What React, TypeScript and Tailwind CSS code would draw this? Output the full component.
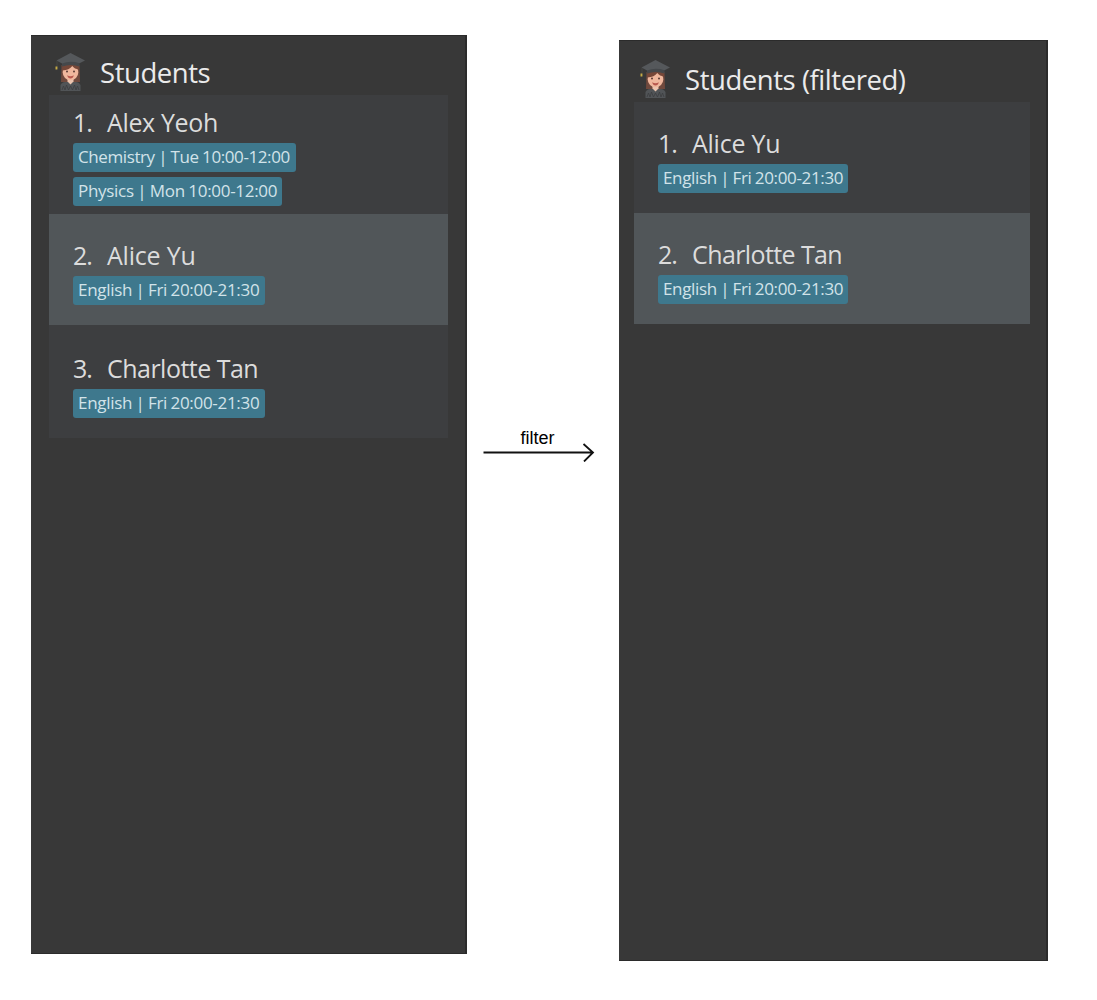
import { clsx } from "clsx";

type Lesson = { text: string; className: string };
type Student = {
  name: string;
  nameClass: string;
  rowClass: string;
  lessons: Lesson[];
};

function GraduateIcon() {
  return (
    <svg viewBox="0 0 34 42" className="h-[42px] w-[34px] shrink-0">
      <path d="M8.500 14h18l.5 17h-19z" fill="#70493d" />
      <path d="M7.500 34q1.500-3 5-3h10q3.500 0 5 3V40h-20z" fill="#515457" />
      <path d="M9 39l1.500-4 1.500 4 1.500-5 2 5 2-4 2 4 2-5 1.500 5 1.500-4 1.500 4" stroke="#3c3e40" strokeWidth="0.800" fill="none" />
      <path d="M14.500 27h6v3.500l-3 3-3-3z" fill="#edc5b0" />
      <ellipse cx="17.500" cy="21.500" rx="7.800" ry="7.800" fill="#f0b79d" />
      <path d="M9.500 14h16l.8 4.500q-5-.5-7-3.500-3 4-9.800 4.500z" fill="#764738" />
      <circle cx="14" cy="20.500" r="1" fill="#5b3a34" />
      <circle cx="21" cy="20.500" r="1" fill="#5b3a34" />
      <path d="M14.200 24.200q3.300 2 6.600 0-.8 3.200-3.300 3.200t-3.300-3.200z" fill="#b9584e" />
      <path d="M9 10q8.500-3 17.500 0v5.500q-8.500-3-17.500 0z" fill="#45484b" />
      <path d="M3.500 9.500L17.500 2l14.500 7.500-5.500 2.700q-9-3-17.500.2z" fill="#55585b" />
      <path d="M4 10v8" stroke="#464a46" strokeWidth="0.800" />
      <path d="M2.500 15.500h1.900v3H2.500z" fill="#c5aa45" />
    </svg>
  );
}

function StudentRow({ student, index, selected }: { student: Student; index: number; selected: boolean }) {
  return (
    <li className={clsx("pl-6", selected ? "bg-[#515659]" : "bg-[#3d3e40]", student.rowClass)}>
      <div className="flex h-10 items-center text-[25px] leading-10 text-[#dcdcdc]">
        <span className="w-[34px] shrink-0 pb-0.5 tracking-[-1px]">{index}.</span>
        <span className={clsx("pb-0.5 whitespace-nowrap", student.nameClass)}>{student.name}</span>
      </div>
      <div className="flex flex-col items-start gap-[5px]">
        {student.lessons.map((lesson) => (
          <span
            key={lesson.text}
            className={clsx(
              "h-[29px] rounded-[3px] bg-[#3e788d] pl-[5px] text-[17px] leading-[28px] whitespace-nowrap text-[#d2e3e9]",
              lesson.className,
            )}
          >
            {lesson.text}
          </span>
        ))}
      </div>
    </li>
  );
}

function Panel({ title, titleClass, headerClass, className, students, selected }: {
  title: string;
  titleClass: string;
  headerClass: string;
  className: string;
  students: Student[];
  selected: number;
}) {
  return (
    <section className={clsx("shrink-0 border-t border-b border-[#2b2b2b] bg-[#383838]", className)}>
      <header className={clsx("flex text-[27.500px] text-[#ebebeb]", headerClass)}>
        <GraduateIcon />
        <h1 className={clsx("ml-[13px] leading-[44px] whitespace-nowrap", titleClass)}>{title}</h1>
      </header>
      <ul>
        {students.map((s, i) => (
          <StudentRow key={s.name} student={s} index={i + 1} selected={i === selected} />
        ))}
      </ul>
    </section>
  );
}

const allStudents: Student[] = [
  {
    name: "Alex Yeoh",
    nameClass: "tracking-[-0.35px]",
    rowClass: "h-[119px] pt-2",
    lessons: [
      { text: "Chemistry | Tue 10:00-12:00", className: "w-[223px] tracking-[-0.4px] [word-spacing:-0.6px]" },
      { text: "Physics | Mon 10:00-12:00", className: "w-[209px] tracking-[-0.3px] [word-spacing:-0.6px]" },
    ],
  },
  {
    name: "Alice Yu",
    nameClass: "tracking-[-0.2px]",
    rowClass: "h-[111px] pt-[22px]",
    lessons: [{ text: "English | Fri 20:00-21:30", className: "w-48 tracking-[-0.3px] [word-spacing:-0.7px]" }],
  },
  {
    name: "Charlotte Tan",
    nameClass: "tracking-[-0.52px]",
    rowClass: "h-[113px] pt-6",
    lessons: [{ text: "English | Fri 20:00-21:30", className: "w-48 tracking-[-0.3px] [word-spacing:-0.7px]" }],
  },
];

const filteredStudents: Student[] = [
  {
    name: "Alice Yu",
    nameClass: "tracking-[-0.25px]",
    rowClass: "h-[111px] pt-[22px]",
    lessons: [{ text: "English | Fri 20:00-21:30", className: "w-[190px] tracking-[-0.35px] [word-spacing:-0.7px]" }],
  },
  {
    name: "Charlotte Tan",
    nameClass: "tracking-[-0.6px]",
    rowClass: "h-[111px] pt-[22px]",
    lessons: [{ text: "English | Fri 20:00-21:30", className: "w-[190px] tracking-[-0.35px] [word-spacing:-0.7px]" }],
  },
];

export default function App() {
  return (
    <main className="flex h-[1000px] w-[1097px] items-start overflow-hidden bg-white pl-[31px] font-['Open_Sans','Noto_Sans',sans-serif]">
      <Panel
        title="Students"
        titleClass="tracking-[-0.45px]"
        headerClass="h-[59px] pt-[15px] pl-1"
        className="mt-[35px] h-[919px] w-[436px] border-r-2 pr-[17px] pl-[18px]"
        students={allStudents}
        selected={1}
      />
      <div className="mt-[427px] flex w-[152px] flex-col items-center">
        <span className="mr-[11px] h-[15px] font-['Liberation_Sans',sans-serif] text-[18px] leading-[23px] text-black">filter</span>
        <svg viewBox="0 0 112 20" className="mr-2 h-5 w-28" fill="none" stroke="#111" strokeWidth="1.800">
          <path d="M0.500 10.500H110M100.500 2L110 10.500L101 19.500" />
        </svg>
      </div>
      <Panel
        title="Students (filtered)"
        titleClass="tracking-[-0.45px]"
        headerClass="h-[61px] pt-[17px] pl-1"
        className="mt-10 h-[921px] w-[429px] border-r-2 pr-4 pl-[15px]"
        students={filteredStudents}
        selected={1}
      />
    </main>
  );
}
